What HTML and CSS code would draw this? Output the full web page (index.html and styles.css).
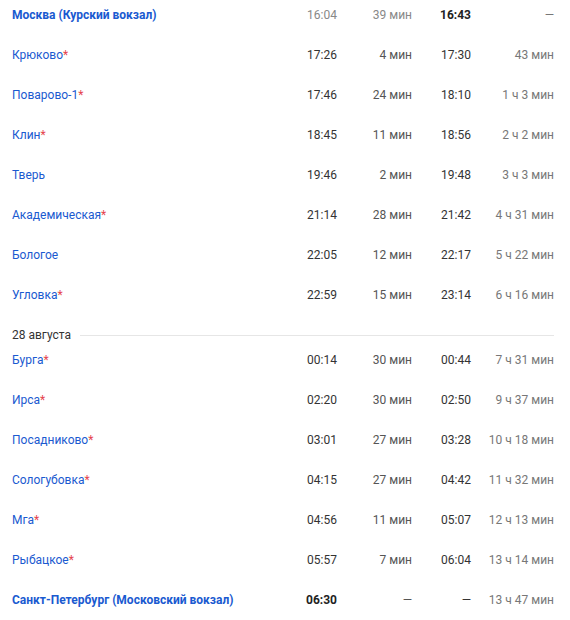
FILE: index.html
```html
<!DOCTYPE html>
<html lang="ru">
<head>
<meta charset="utf-8">
<link rel="stylesheet" href="styles.css">
</head>
<body>
<div class="schedule">
  <div class="row row-end">
    <a class="station station-main">Москва (Курский вокзал)</a>
    <span class="arr muted">16:04</span>
    <span class="stop muted">39 мин</span>
    <span class="dep bold">16:43</span>
    <span class="total">—</span>
  </div>
  <div class="row"><a class="station">Крюково<span class="star">*</span></a><span class="arr">17:26</span><span class="stop">4 мин</span><span class="dep">17:30</span><span class="total">43 мин</span></div>
  <div class="row"><a class="station">Поварово-1<span class="star">*</span></a><span class="arr">17:46</span><span class="stop">24 мин</span><span class="dep">18:10</span><span class="total">1 ч 3 мин</span></div>
  <div class="row"><a class="station">Клин<span class="star">*</span></a><span class="arr">18:45</span><span class="stop">11 мин</span><span class="dep">18:56</span><span class="total">2 ч 2 мин</span></div>
  <div class="row"><a class="station">Тверь</a><span class="arr">19:46</span><span class="stop">2 мин</span><span class="dep">19:48</span><span class="total">3 ч 3 мин</span></div>
  <div class="row"><a class="station">Академическая<span class="star">*</span></a><span class="arr">21:14</span><span class="stop">28 мин</span><span class="dep">21:42</span><span class="total">4 ч 31 мин</span></div>
  <div class="row"><a class="station">Бологое</a><span class="arr">22:05</span><span class="stop">12 мин</span><span class="dep">22:17</span><span class="total">5 ч 22 мин</span></div>
  <div class="row"><a class="station">Угловка<span class="star">*</span></a><span class="arr">22:59</span><span class="stop">15 мин</span><span class="dep">23:14</span><span class="total">6 ч 16 мин</span></div>
  <div class="date-sep"><span class="date-text">28 августа</span><span class="date-line"></span></div>
  <div class="row"><a class="station">Бурга<span class="star">*</span></a><span class="arr">00:14</span><span class="stop">30 мин</span><span class="dep">00:44</span><span class="total">7 ч 31 мин</span></div>
  <div class="row"><a class="station">Ирса<span class="star">*</span></a><span class="arr">02:20</span><span class="stop">30 мин</span><span class="dep">02:50</span><span class="total">9 ч 37 мин</span></div>
  <div class="row"><a class="station">Посадниково<span class="star">*</span></a><span class="arr">03:01</span><span class="stop">27 мин</span><span class="dep">03:28</span><span class="total">10 ч 18 мин</span></div>
  <div class="row"><a class="station">Сологубовка<span class="star">*</span></a><span class="arr">04:15</span><span class="stop">27 мин</span><span class="dep">04:42</span><span class="total">11 ч 32 мин</span></div>
  <div class="row"><a class="station">Мга<span class="star">*</span></a><span class="arr">04:56</span><span class="stop">11 мин</span><span class="dep">05:07</span><span class="total">12 ч 13 мин</span></div>
  <div class="row"><a class="station">Рыбацкое<span class="star">*</span></a><span class="arr">05:57</span><span class="stop">7 мин</span><span class="dep">06:04</span><span class="total">13 ч 14 мин</span></div>
  <div class="row row-end">
    <a class="station station-main">Санкт-Петербург (Московский вокзал)</a>
    <span class="arr bold">06:30</span>
    <span class="stop">—</span>
    <span class="dep">—</span>
    <span class="total">13 ч 47 мин</span>
  </div>
</div>
</body>
</html>
```
FILE: styles.css
```css
html, body {
  margin: 0;
  padding: 0;
  background: #fff;
}
body {
  font-family: Roboto, "Noto Sans", sans-serif;
  font-size: 12px;
  color: #333;
}
.schedule {
  width: 542px;
  padding: 7px 0 0 12px;
  display: flex;
  flex-direction: column;
}
.row {
  display: grid;
  grid-template-columns: 1fr 48px 75px 59px 83px;
  line-height: 16px;
  margin-bottom: 24px;
  white-space: nowrap;
}
.station {
  color: #1a5ad0;
  text-decoration: none;
}
.station-main {
  font-weight: 700;
}
.star {
  color: #e5444d;
}
.arr, .stop, .dep, .total {
  text-align: right;
}
.stop {
  color: #555;
}
.total {
  color: #777;
}
.muted {
  color: #888;
}
.bold {
  font-weight: 700;
  color: #222;
}
.date-sep {
  display: flex;
  align-items: center;
  gap: 9px;
  line-height: 16px;
  margin-bottom: 9px;
  color: #333;
}
.date-line {
  flex: 1;
  height: 1px;
  background: #e6e6e6;
}
```
